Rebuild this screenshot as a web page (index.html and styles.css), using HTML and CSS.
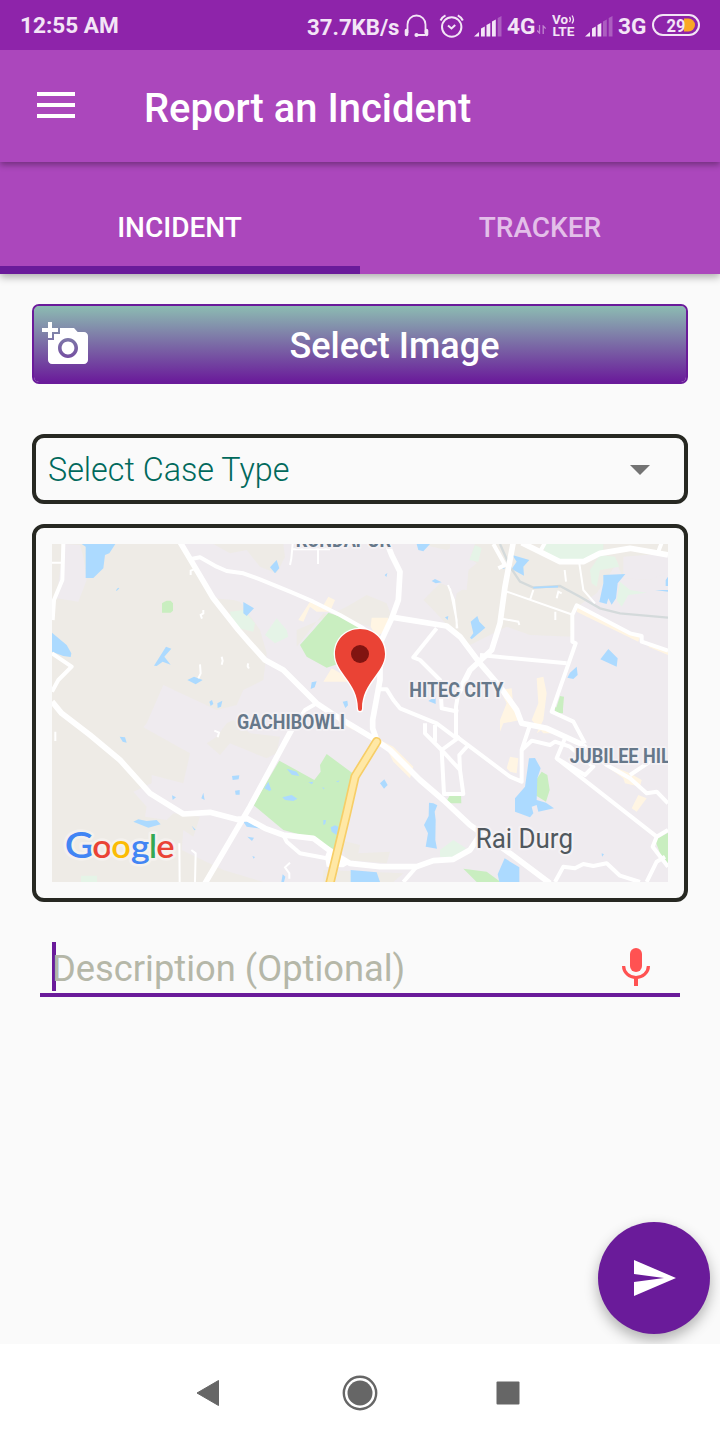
FILE: index.html
```html
<!DOCTYPE html>
<html lang="en">
<head>
<meta charset="utf-8">
<title>Report an Incident</title>
<link rel="stylesheet" href="styles.css">
</head>
<body>
<div class="screen">
  <div class="status">
    <span class="clock">12:55 AM</span>
    <span class="speed">37.7KB/s</span>
    <svg class="s-head" width="26" height="26" viewBox="404 12 26 26" fill="none" stroke="#f3e5f6" stroke-width="1.8"><path d="M407.500 32V23.500a9 9 0 0 1 18 0V32M425 34H417"/><path d="M406.500 29.500v4M426.500 29.500v4" stroke-width="3.600" stroke-linecap="round"/><circle cx="416.500" cy="34" r="1.200" fill="#f3e5f6"/></svg>
    <svg class="s-alarm" width="26" height="26" viewBox="439 12 26 26" fill="none" stroke="#f3e5f6" stroke-width="2"><circle cx="451.700" cy="26" r="9.700"/><path d="M448 24.500l3.500 3 3.700-3.500M440.500 19.500q1.500-3.500 5-5.200M462.800 19.500q-1.500-3.500-5-5.200"/></svg>
    <svg class="s-signal" width="28" height="21" viewBox="0 0 28 21" fill="#f3e5f6"><path d="M0 20.500l5-4.500v4.500zM7 20.500V12.500l3.800-2v10zM12.500 20.500V9l3.800-2v13.500zM18 20.500V5.500l3.800-2v17z"/><path opacity=".3" d="M23.700 20.500V2l3.800-2v20.500z"/></svg>
    <span class="net">4G</span>
    <svg class="s-data" width="9" height="9" viewBox="0 0 9 9" fill="none" stroke="#f3e5f6" stroke-width="1.300" opacity=".5"><path d="M2.500 0v8L0 5.500M6.200 9V1l2.500 2.500"/></svg>
    <svg class="volte" width="24" height="24" viewBox="0 0 24 24"><text x="0" y="10" textLength="16" lengthAdjust="spacingAndGlyphs">Vo</text><path d="M17.500 3q1.800 2.500 0 5M20 1.500q2.800 4 0 8" fill="none" stroke="#f3e5f6" stroke-width="1.300"/><text x="0.500" y="21.500" textLength="22" lengthAdjust="spacingAndGlyphs">LTE</text></svg>
    <svg class="s-signal second" width="28" height="21" viewBox="0 0 28 21" fill="#f3e5f6"><path d="M0 20.500l5-4.500v4.500zM7 20.500V12.500l3.800-2v10zM12.500 20.500V9l3.800-2v13.500z"/><path opacity=".3" d="M18 20.500V5.500l3.800-2v17zM23.700 20.500V2l3.800-2v20.500z"/></svg>
    <span class="net three">3G</span>
    <svg class="s-batt" width="48" height="22" viewBox="0 0 48 22"><rect x="1" y="1" width="46" height="20" rx="10" fill="none" stroke="#f3e5f6" stroke-width="2"/><path d="M32 4.500h4.500a6.500 6.500 0 0 1 0 13H32z" fill="#f9a825"/><text x="14.500" y="17.500" textLength="19" lengthAdjust="spacingAndGlyphs" class="batt-num">29</text></svg>
  </div>

  <header class="appbar">
    <svg class="menu" width="38" height="26" viewBox="0 0 38 26"><path d="M0 2h38M0 13h38M0 24h38" stroke="#fff" stroke-width="4"/></svg>
    <h1>Report an Incident</h1>
  </header>
  <nav class="tabs">
    <div class="tab active">INCIDENT</div>
    <div class="tab">TRACKER</div>
  </nav>

  <main class="content">
    <button class="select-image">
      <svg width="48" height="48" viewBox="0 0 24 24" fill="#fff"><path d="M3 4V1h2v3h3v2H5v3H3V6H0V4h3zm3 6V7h3V4h7l1.830 2H21c1.100 0 2 .900 2 2v12c0 1.100-.900 2-2 2H5c-1.100 0-2-.900-2-2V10h3zm7 9c2.760 0 5-2.240 5-5s-2.240-5-5-5-5 2.240-5 5 2.240 5 5 5zm-3.200-5c0 1.770 1.430 3.200 3.200 3.200s3.200-1.430 3.200-3.200-1.430-3.200-3.200-3.200-3.200 1.430-3.200 3.200z"/></svg>
      <span>Select Image</span>
    </button>

    <div class="case-type"><span>Select Case Type</span><svg width="20" height="10" viewBox="0 0 20 10"><path d="M0 0h20L10 10z" fill="#737373"/></svg></div>

    <div class="map-frame">
      <svg class="map" width="616" height="338" viewBox="66 72 1848 1014">
        <rect x="66" y="72" width="1848" height="1014" fill="#efebef"/>
        <g fill="#eeebe6">
          <path d="M66 72H445L485 125 550 235 610 240 630 245 690 330 710 400 700 480 640 510 620 555 560 570 400 495 350 610 340 622 480 700 460 790 365 765 365 790 310 815 350 860 345 890 410 900 430 880 510 890 490 950 460 930 455 990 580 1050 700 1086H66z"/>
          <path d="M550 72H760L765 110 740 160 690 140 650 90 600 100zM560 650L590 610 610 600 660 640 750 650 740 700 710 715 600 670 570 705 530 670zM800 330L870 300 950 260 1010 225 1070 250 1085 290 1020 320 880 280 800 380zM1170 72H1290L1250 90zM1180 240L1230 190 1260 200 1310 330 1260 325 1210 270zM1260 72H1914V150L1860 180 1780 175 1760 130 1700 220 1635 265 1630 350 1500 345 1430 320 1390 340 1350 360 1310 380 1260 325 1280 220 1310 200 1315 150 1340 130zM930 960L990 975 985 1000 1080 995 1070 1030 950 1020zM880 1050L1120 1060 1090 1086H880z"/>
        </g>
        <path fill="#efebef" d="M100 72L150 75 160 110 170 180 145 245 80 235zM1260 72L1335 72 1318 120 1315 150 1310 210 1260 205zM1780 110L1914 100V155L1860 180 1780 175z"/>
        <g fill="#e5f4e7">
          <path d="M600 275L640 270 675 310 670 335 610 320zM740 295L770 330 775 350 735 370 705 345zM1540 72H1720V100L1660 120 1590 120 1545 100zM1335 75L1355 85 1345 125 1318 120zM1680 150L1710 105 1755 110 1768 140 1710 150 1700 200 1685 190zM1770 185L1800 210 1850 218 1795 225 1775 260 1760 240zM153 1067h48v19h-48zM1230 990L1270 960 1308 985 1270 1015 1230 1010z"/>
        </g>
        <g fill="#c9eec0">
          <path d="M396 250L402 246 410 242 422 242 429 250V272L422 278H396zM895 278L960 300 1010 330 930 430 890 443 830 410 810 375 850 330zM1590 528L1602 530 1598 578 1575 575zM1575 562h24v18h-24zM748 722L853 780 872 755 870 735 890 702 975 765 915 990 850 955 760 930 670 855zM1260 825L1293 823 1294 850H1246zM1535 755L1552 765 1559 810 1548 845 1515 825 1518 780zM1875 960L1914 938V1030L1890 1000zM1300 1046L1370 1055 1412 1086H1340z"/>
        </g>
        <g fill="#fff5e3">
          <path d="M805 300L840 245 875 265 895 230 915 240 900 275 860 275 840 260 820 305zM1025 293L1075 293 1070 330 1040 350 1022 320zM880 485L905 445 950 470 970 485zM1520 475L1540 470 1550 520 1540 600 1520 640 1550 620 1565 640 1540 640 1505 600 1525 550zM1410 600L1430 550 1410 510 1445 505 1450 560 1470 600 1420 610 1410 635zM1430 745L1440 710 1465 715 1460 760 1440 755zM1640 260L1830 350 1825 365 1640 275zM1860 375L1914 395V405L1855 380zM1710 725L1800 760 1835 780 1830 800 1785 790 1780 775zM1805 865L1825 825 1850 835 1820 875zM1060 665L1090 680 1150 740 1140 775 1090 725zM930 595L975 615 970 630 925 605z"/>
        </g>
        <g fill="#acdaff">
          <path d="M155 72H256L238 100 225 105 220 145 190 174H167V80zM258 211l6-8 4 2-8 8zM66 338L110 375 124 400 122 411 100 408 66 395zM372 437L408 380 424 386 403 410 422 434 398 425 380 438zM472 480L492 470 518 480 497 493zM538 545l8-5 4 12-8 6zM562 550l15-8-4 18-10 4zM640 246L672 265 650 288 640 280zM720 142L740 120 748 145 735 160zM1160 72H1200L1180 94 1165 90zM1205 183l10-6 20 10-18 3zM1064 165l8-6-3 12zM1245 292l10-4-2 12zM845 487l15-3-6 18-12 5zM938 545l14-3 2 14-8 8zM1195 543l22-15v24z"/>
          <path d="M1447 105L1498 120 1480 140 1482 167 1460 155 1445 147 1460 125zM1412 143l8-8 4 12zM1322 305L1342 288 1348 305 1366 323 1325 358 1320 353 1330 340zM1720 165L1786 162 1763 190 1758 235 1745 254 1735 235 1730 252 1708 246 1720 190zM1735 387L1763 415 1760 440 1711 418zM1612 473L1620 458 1640 440 1643 465 1630 477zM1907 180l7-10v28h-7zM1875 210h39v5zM269 650L285 652 290 668 278 665zM426 826l12 6-10 8zM520 818l4 22-10-5zM606 768l22-2-2 12-18 2zM615 812l14-2v14h-12zM485 917l12 12-4 2zM310 905L325 898 350 903 380 900 392 913 355 923z"/>
          <path d="M770 746L800 755 808 768 785 764zM835 787l15-2-4 8zM715 785L724 810 718 813 703 805zM757 832L785 825 802 836 790 843 765 840zM888 900l-2 12-6 3v-15zM902 922L915 916 925 920 920 945 905 935zM918 785l10-4-3 6zM876 802l8 2-3 4zM1050 790L1063 778 1073 795 1062 806zM1197 848L1210 850 1222 856 1214 875 1217 900 1216 960 1221 986 1187 980 1194 940 1182 915 1196 888zM640 905L665 906 695 926 650 920zM652 950l20 3-6 10zM667 1008l8 3-4 5zM754 1086l4-23 8 7-4 16zM962 1086V1050L1040 1057 1050 1086zM1497 715L1515 714 1532 745 1522 775 1520 840 1548 848 1572 865 1525 875 1520 855 1505 860 1510 880 1500 892 1455 875 1455 835 1485 800zM1403 1063L1424 1015 1468 1042V1086H1408zM1715 1000l7 3-6 7z"/>
        </g>
        <path d="M1410 72L1440 140 1470 185 1510 203 1590 198 1650 230 1710 265 1770 280 1914 293" fill="none" stroke="#d4dadb" stroke-width="7"/>
        <path d="M1510 203L1584 200" stroke="#acdaff" stroke-width="5"/>
        <g class="lanes">
          <path d="M1425 213L1630 285M1510 210L1500 240M1648 130L1660 210 1695 250M1604 150L1608 185M1580 235L1585 215 1595 220M1576 275V300M1410 295L1465 305 1468 315M1260 205L1280 300V325M788 72L784 115 780 135M785 88H900M864 88V132M1254 195L1272 240 1282 325M66 128H100M482 165V152L492 148M520 270V280L512 285 516 296M575 410L578 422 575 434M510 433L512 460 505 475M448 970L449 1086M484 990L497 1000 495 1086M780 1028L765 1042 778 1060V1076M553 632L567 638 563 652M655 430q-5 12 3 14M76 635v28"/>
        </g>
        <g class="streets">
          <path d="M480 118L510 112 560 140 590 153 640 160 690 178 780 215 850 245 930 285 1000 325 1040 350"/>
          <path d="M100 72L97 180 72 240 68 300M66 400L125 440 85 480 66 515M860 550L825 570 785 630"/>
          <path d="M1220 325L1150 412 1170 420 1230 480 1235 565 1285 575M1040 508H1070L1090 540 1110 565 1220 610 1280 655M1185 610V640L1235 690 1242 822H1300L1290 750 1235 690 1290 650M1215 615V665M1290 750L1288 705 1315 675"/>
          <path d="M1285 520L1278 560V650M1350 405L1610 430M1530 95L1545 68M1885 95L1895 68M1390 72L1425 135 1405 145"/>
          <path d="M1914 392L1835 365V348L1800 340 1640 256 1627 285V365L1637 370 1565 575 1630 605 1665 670M1280 650L1440 770 1475 785V690L1500 615M1475 690L1505 662 1560 675 1575 665 1620 680 1690 740 1665 765 1580 715 1605 655"/>
          <path d="M1580 715L1880 950 1868 980 1914 1040M1880 950L1914 930M1660 675L1730 735 1800 775 1850 820 1880 815 1914 850M1800 765L1860 725M1575 1086L1600 1040 1635 1045 1660 1032 1690 1038 1730 1030 1770 1067 1830 1086M1850 1086L1880 1025 1905 1010"/>
          <path d="M760 945L770 965 810 1000 890 1015M1160 1040L1120 1086"/>
        </g>
        <g class="roads">
          <path d="M450 66L485 125 550 235 625 330 660 370 705 420 760 450 860 550 905 580 1030 655 1080 690 1170 780 1240 840 1320 915 1440 1000 1560 1090"/>
          <path d="M1070 66L1085 105 1110 155 1105 240 1085 295 1050 370 1050 480 1028 600 1028 625 1040 660"/>
          <path d="M1090 292L1250 318 1290 350 1350 430 1410 500 1460 570 1475 610 1550 625 1660 675"/>
          <path d="M1450 66L1425 200 1410 310 1385 390 1320 450 1285 520M1475 68L1590 125H1660L1710 100 1800 85 1914 105"/>
          <path d="M66 545L95 580 180 645 270 720 360 820 460 882 540 877 620 898 650 895 705 925 760 945 850 955 910 1000 960 1030 1050 1040 1160 1040 1210 1022 1270 1018 1320 990 1350 945M525 1090L660 860 795 610"/>
        </g>
        <path d="M895 985L930 1010 960 1030 940 1042 890 1040 885 1010z" fill="#fff"/>
        <path d="M1040 665L975 770 950 880 896 1105" fill="none" stroke="#f7ce67" stroke-width="28" stroke-linecap="round" stroke-linejoin="round"/>
        <path d="M1040 665L975 770 950 880 896 1105" fill="none" stroke="#ffe8a5" stroke-width="18" stroke-linecap="round" stroke-linejoin="round"/>
        <g class="places">
          <text x="797" y="81" textLength="286" lengthAdjust="spacingAndGlyphs">KONDAPUR</text>
          <text x="1138" y="530" textLength="282" lengthAdjust="spacingAndGlyphs">HITEC CITY</text>
          <text x="621" y="626" textLength="324" lengthAdjust="spacingAndGlyphs">GACHIBOWLI</text>
          <text x="1619" y="728" textLength="366" lengthAdjust="spacingAndGlyphs">JUBILEE HILLS</text>
        </g>
        <text class="town" x="1337" y="983" textLength="292" lengthAdjust="spacingAndGlyphs">Rai Durg</text>
        <g class="google">
          <text x="104" y="1015" font-size="112" fill="#4285f4" textLength="87" lengthAdjust="spacingAndGlyphs">G</text>
          <text x="187" y="1015" fill="#ea4335" textLength="59" lengthAdjust="spacingAndGlyphs">o</text>
          <text x="244" y="1015" fill="#fbbc05" textLength="59" lengthAdjust="spacingAndGlyphs">o</text>
          <text x="302" y="1015" fill="#4285f4" textLength="58" lengthAdjust="spacingAndGlyphs">g</text>
          <text x="357" y="1015" fill="#34a853" textLength="24" lengthAdjust="spacingAndGlyphs">l</text>
          <text x="379" y="1015" fill="#ea4335" textLength="55" lengthAdjust="spacingAndGlyphs">e</text>
        </g>
        <path d="M990 327C947 327 915 360 915 402C915 459 984 486 984 566Q984 573 990 573T996 566C996 486 1065 459 1065 402C1065 360 1033 327 990 327z" fill="#ea4335" stroke="#fff" stroke-width="8" paint-order="stroke"/>
        <circle cx="990" cy="402" r="27" fill="#811411"/>
      </svg>
    </div>

    <div class="description">
      <span class="caret"></span><span class="hint">Description (Optional)</span>
      <svg class="mic" width="28" height="38" viewBox="0 0 28 38"><rect x="8" y="0" width="12" height="24" rx="6" fill="#ff5252"/><path d="M1.600 18a12.400 11.600 0 0 0 24.800 0" fill="none" stroke="#ff5252" stroke-width="3.200"/><path d="M12 30h4v8h-4z" fill="#ff5252"/></svg>
    </div>

    <button class="send" aria-label="Send"><svg width="42" height="36" viewBox="0 0 42 36"><path d="M0 0L42 18 0 36V22L30 18 0 14z" fill="#fff"/></svg></button>
  </main>

  <footer class="softkeys">
    <svg width="24" height="28" viewBox="0 0 24 28"><path d="M22.500 1.500V26.500L1 14z" fill="#666" stroke="#666" stroke-linejoin="round"/></svg>
    <svg class="home" width="36" height="36" viewBox="0 0 36 36"><circle cx="18" cy="18" r="16.200" fill="none" stroke="#666" stroke-width="2.400"/><circle cx="18" cy="18" r="12.500" fill="#666"/></svg>
    <svg width="24" height="24" viewBox="0 0 24 24"><rect x=".5" y=".5" width="23" height="23" rx="1" fill="#666"/></svg>
  </footer>
</div>
</body>
</html>
```
FILE: styles.css
```css
* { box-sizing: border-box; }
body { margin: 0; font-family: Roboto, "Noto Sans", sans-serif; background: #fafafa; }
button { font: inherit; }
svg { display: block; flex: none; }
.screen { width: 720px; height: 1440px; display: flex; flex-direction: column; overflow: hidden; }

.status { height: 50px; flex: none; display: flex; align-items: center; padding: 2px 20px 0; background: #8e24aa; color: #f3e5f6; font-weight: 700; font-size: 23px; line-height: 28px; white-space: nowrap; }
.clock { width: 287px; font-size: 22.600px; }
.speed { width: 97px; font-size: 22.200px; padding-top: 1px; }
.s-alarm { margin-left: 9px; }
.s-signal { margin: 0 0 0 9px; }
.net { margin-left: 5px; width: 30px; padding-top: 1px; font-size: 22.600px; }
.s-data { margin: 7px 5px 0 0; }
.volte { margin: -1px -1px 0 1px; font: 700 12.500px Roboto, sans-serif; fill: #f3e5f6; }
.s-signal.second { margin-left: 10px; }
.net.three { margin-left: 5px; width: 34px; }
.s-batt { margin-top: -3px; }
.batt-num { font: 700 17.500px Roboto, sans-serif; fill: #f3e5f6; }

.appbar { position: relative; z-index: 2; height: 112px; flex: none; display: flex; align-items: center; padding: 0 37px; gap: 69px; background: #ab47bc; box-shadow: 0 3px 6px rgba(0, 0, 0, .32); clip-path: inset(0 0 -16px 0); }
.menu { margin-top: -2px; }
.appbar h1 { margin: 6px 0 0; color: #fff; font-size: 39.900px; line-height: 48px; font-weight: 500; white-space: nowrap; }

.tabs { position: relative; z-index: 1; height: 112px; flex: none; display: flex; background: #ab47bc; box-shadow: 0 3px 8px rgba(0, 0, 0, .32); }
.tab { flex: 0 0 50%; display: flex; align-items: center; justify-content: center; padding-top: 26px; border-bottom: 8px solid transparent; color: #e3bfe9; font-size: 28px; font-weight: 500; }
.tab.active { color: #fff; border-color: #6a1b9a; padding-right: 1px; }

.content { position: relative; flex: 1; display: flex; flex-direction: column; padding: 30px 32px 0; background: #fafafa; overflow: hidden; }
.select-image { height: 80px; flex: none; display: flex; align-items: center; margin: 0; padding: 0 8px; border: 2px solid #6a1b9a; border-radius: 7px; background: linear-gradient(#8cbcb2, #6a1b9a) padding-box; color: #fff; font-size: 36px; font-weight: 500; }
.select-image span { flex: 1; text-align: center; padding: 4px 0 0 21px; }

.case-type { height: 70px; flex: none; margin-top: 50px; display: flex; align-items: center; justify-content: space-between; padding: 1px 34px 0 12px; border: 4px solid #272822; border-radius: 12px; color: #00695c; font-size: 32.300px; font-weight: 300; }
.case-type svg { margin-top: 1px; }
.map-frame { height: 378px; flex: none; margin-top: 20px; padding: 16px; border: 4px solid #272822; border-radius: 12px; }
.lanes { fill: none; stroke: #fff; stroke-width: 6; }
.streets { fill: none; stroke: #fff; stroke-width: 12; stroke-linejoin: round; }
.roads { fill: none; stroke: #fff; stroke-width: 17; stroke-linejoin: round; }
.places { font: 700 60px Roboto, sans-serif; fill: #66788a; stroke: #f4f1f4; stroke-width: 12px; stroke-linejoin: round; paint-order: stroke; }
.town { font: 400 83px Roboto, sans-serif; fill: #50585e; stroke: #f4f1f4; stroke-width: 14px; stroke-linejoin: round; paint-order: stroke; }
.google { font: 600 100px Lato, sans-serif; stroke: #f4f1ee; stroke-width: 16px; stroke-linejoin: round; paint-order: stroke; }

.description { height: 55px; flex: none; display: flex; align-items: center; margin: 40px 8px 0; padding: 0 30px 0 12px; border-bottom: 4px solid #6a1b9a; }
.caret { width: 4px; height: 49px; margin-top: -2px; background: #6a1b9a; }
.hint { flex: 1; margin-left: -4px; padding-top: 2px; color: #b5b7a8; font-size: 36.300px; white-space: nowrap; }
.mic { margin-top: -1px; }
.send { position: absolute; right: 10px; bottom: 10px; width: 112px; height: 112px; border: 0; border-radius: 50%; padding: 0 0 0 1px; display: flex; align-items: center; justify-content: center; background: #6a1b9a; box-shadow: 0 6px 14px rgba(0, 0, 0, .3); }

.softkeys { height: 96px; flex: none; display: flex; align-items: center; justify-content: space-between; padding: 1px 200px 0 196px; background: #fff; }
.home { margin: 0 -2px 0 2px; }
```
